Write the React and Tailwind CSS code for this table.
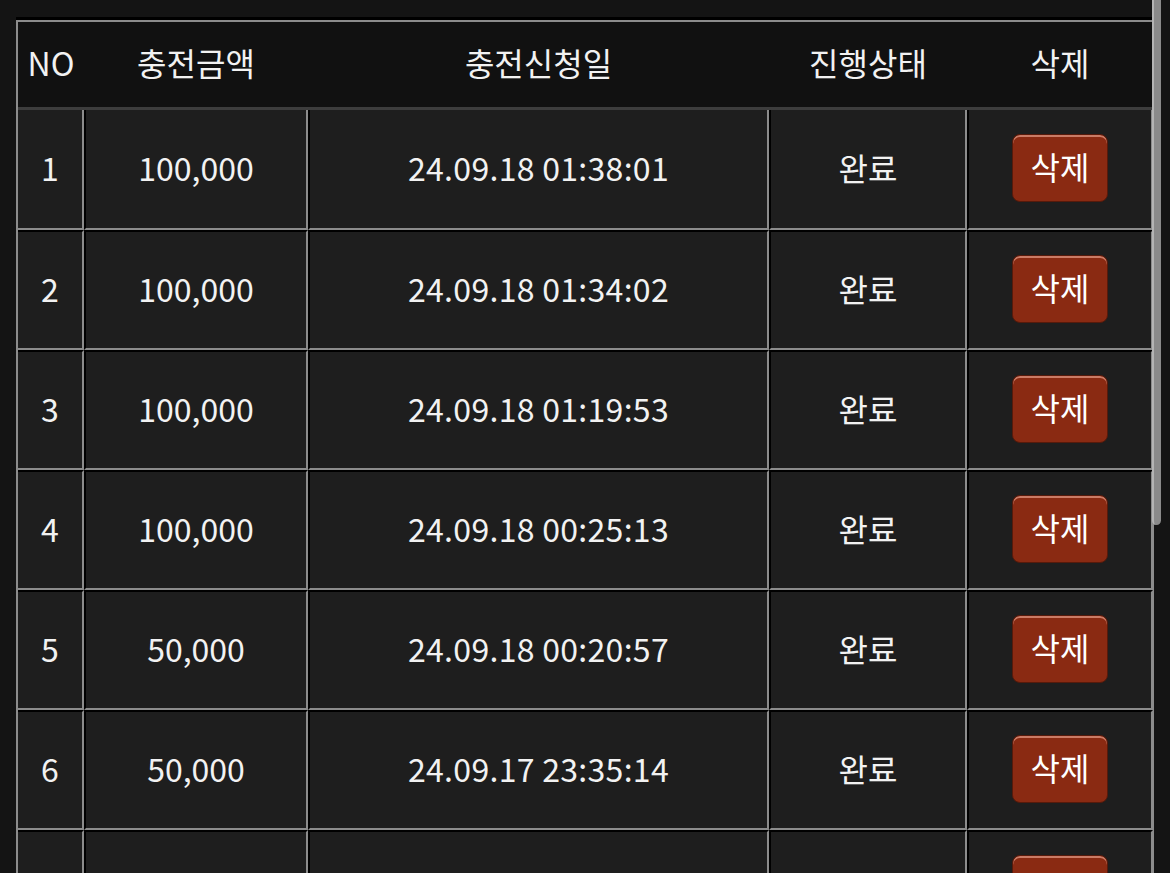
import React from "react";

const rows = [
  { no: 1, amount: "100,000", date: "24.09.18 01:38:01", status: "완료" },
  { no: 2, amount: "100,000", date: "24.09.18 01:34:02", status: "완료" },
  { no: 3, amount: "100,000", date: "24.09.18 01:19:53", status: "완료" },
  { no: 4, amount: "100,000", date: "24.09.18 00:25:13", status: "완료" },
  { no: 5, amount: "50,000", date: "24.09.18 00:20:57", status: "완료" },
  { no: 6, amount: "50,000", date: "24.09.17 23:35:14", status: "완료" },
  // next row sits below the fold, only its frame and button top show
  { no: null, amount: "", date: "", status: "" },
];

function Row({ row, first }) {
  const top = first ? "" : "border-t-2 border-t-black";
  const cell =
    "flex items-center justify-center pb-[4px] bg-[#1e1e1e] border-b-2 border-r-2 border-b-[#8c8c8c] border-r-[#8c8c8c] " +
    top;
  const inner = cell + " border-l-2 border-l-black";
  return (
    <div className="flex h-[120px]">
      <div className={cell + " w-[66px]"}>{row.no}</div>
      <div className={inner + " w-[224px]"}>{row.amount}</div>
      <div className={inner + " w-[461px] tracking-[0.3px]"}>{row.date}</div>
      <div className={inner + " w-[198px]"}>{row.status}</div>
      <div className={inner + " w-[186px]"}>
        <button className="w-[96px] h-[68px] mt-[2px] pb-[4px] rounded-lg bg-[#8a2a12] border border-[#561a0b] text-white shadow-[inset_0_2px_0_rgba(255,190,170,0.55)]">
          {row.no ? "삭제" : ""}
        </button>
      </div>
    </div>
  );
}

export default function App() {
  return (
    <div
      className="relative h-[873px] overflow-hidden bg-[#141414] pl-4 pt-[17px] text-[32px] leading-none text-[#f2f2f2]"
      style={{ fontFamily: '"Noto Sans CJK KR", "Noto Sans", sans-serif' }}
    >
      <div className="w-[1138px] border-t-[3px] border-black">
        <div className="border-l-2 border-r border-[#8c8c8c]">
          {/* Header */}
          <div className="flex h-[90px] pb-[6px] bg-[#111111] border-t-2 border-t-[#8c8c8c] border-b-[3px] border-b-[#3d3d3d]">
            <div className="w-[66px] flex items-center justify-center">NO</div>
            <div className="w-[224px] flex items-center justify-center">충전금액</div>
            <div className="w-[461px] flex items-center justify-center">충전신청일</div>
            <div className="w-[198px] flex items-center justify-center">진행상태</div>
            <div className="w-[186px] flex items-center justify-center">삭제</div>
          </div>
          {rows.map((row, i) => (
            <Row key={i} row={row} first={i === 0} />
          ))}
        </div>
      </div>

      {/* scrollbar thumb */}
      <div className="absolute left-[1152px] top-0 w-[9px] h-[525px] bg-[#8a8a8a] rounded-b-[5px] border-l-2 border-[#b4b4b4]" />
    </div>
  );
}
